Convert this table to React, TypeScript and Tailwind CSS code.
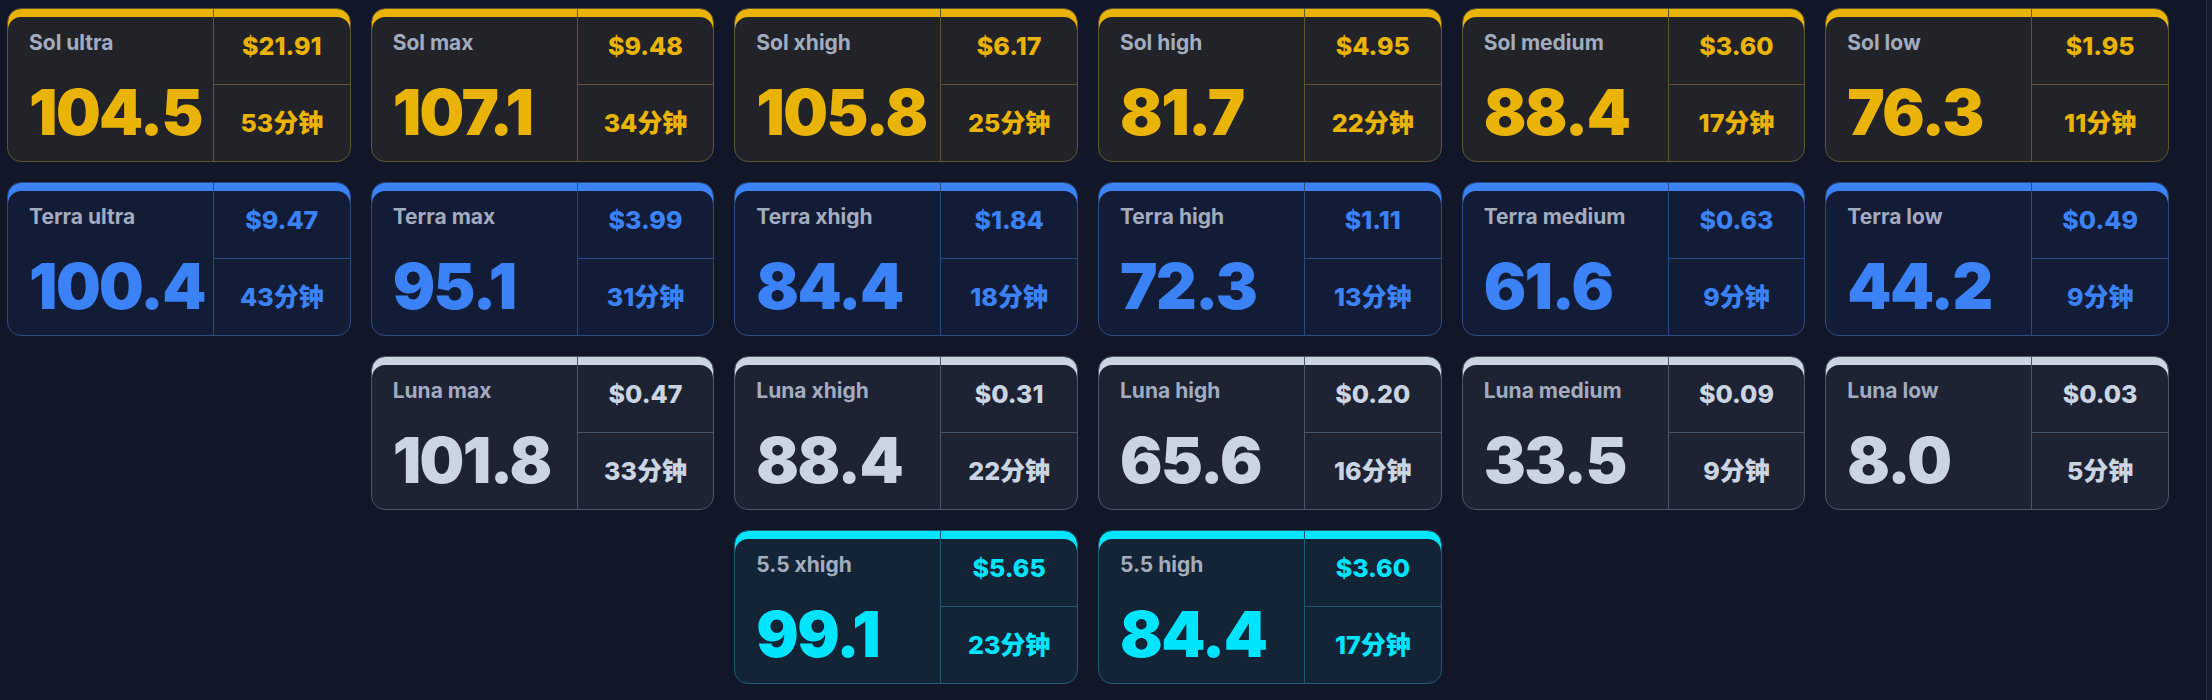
import React from 'react';

type Tier = 'sol' | 'terra' | 'luna' | 'gpt';

const tierStyle: Record<Tier, { card: string; accent: string; line: string }> = {
  sol: {
    card: 'bg-[#222329] border-[#5e552f] shadow-[inset_0_8px_0_0_#eab308]',
    accent: 'text-[#eab308]',
    line: 'border-[#5e552f]',
  },
  terra: {
    card: 'bg-[#131c37] border-[#2d4a7f] shadow-[inset_0_8px_0_0_#3b82f6]',
    accent: 'text-[#3b82f6]',
    line: 'border-[#2d4a7f]',
  },
  luna: {
    card: 'bg-[#1e2334] border-[#4b5569] shadow-[inset_0_8px_0_0_#cbd5e1]',
    accent: 'text-[#cbd5e1]',
    line: 'border-[#4b5569]',
  },
  gpt: {
    card: 'bg-[#132436] border-[#1d5b70] shadow-[inset_0_8px_0_0_#00e5ff]',
    accent: 'text-[#00e5ff]',
    line: 'border-[#1d5b70]',
  },
};

type Item = { name: string; score: string; price: string; time: string; tier: Tier; start?: string };

const items: Item[] = [
  { name: 'Sol ultra', score: '104.5', price: '$21.91', time: '53分钟', tier: 'sol' },
  { name: 'Sol max', score: '107.1', price: '$9.48', time: '34分钟', tier: 'sol' },
  { name: 'Sol xhigh', score: '105.8', price: '$6.17', time: '25分钟', tier: 'sol' },
  { name: 'Sol high', score: '81.7', price: '$4.95', time: '22分钟', tier: 'sol' },
  { name: 'Sol medium', score: '88.4', price: '$3.60', time: '17分钟', tier: 'sol' },
  { name: 'Sol low', score: '76.3', price: '$1.95', time: '11分钟', tier: 'sol' },
  { name: 'Terra ultra', score: '100.4', price: '$9.47', time: '43分钟', tier: 'terra' },
  { name: 'Terra max', score: '95.1', price: '$3.99', time: '31分钟', tier: 'terra' },
  { name: 'Terra xhigh', score: '84.4', price: '$1.84', time: '18分钟', tier: 'terra' },
  { name: 'Terra high', score: '72.3', price: '$1.11', time: '13分钟', tier: 'terra' },
  { name: 'Terra medium', score: '61.6', price: '$0.63', time: '9分钟', tier: 'terra' },
  { name: 'Terra low', score: '44.2', price: '$0.49', time: '9分钟', tier: 'terra' },
  { name: 'Luna max', score: '101.8', price: '$0.47', time: '33分钟', tier: 'luna', start: 'col-start-2' },
  { name: 'Luna xhigh', score: '88.4', price: '$0.31', time: '22分钟', tier: 'luna' },
  { name: 'Luna high', score: '65.6', price: '$0.20', time: '16分钟', tier: 'luna' },
  { name: 'Luna medium', score: '33.5', price: '$0.09', time: '9分钟', tier: 'luna' },
  { name: 'Luna low', score: '8.0', price: '$0.03', time: '5分钟', tier: 'luna' },
  { name: '5.5 xhigh', score: '99.1', price: '$5.65', time: '23分钟', tier: 'gpt', start: 'col-start-3' },
  { name: '5.5 high', score: '84.4', price: '$3.60', time: '17分钟', tier: 'gpt' },
];

const ScoreCard = ({ item }: { item: Item }) => {
  const s = tierStyle[item.tier];
  return (
    <div className={`${item.start ?? ''} grid h-[154px] grid-cols-[3fr_2fr] overflow-hidden rounded-[14px] border ${s.card}`}>
      <div className="pl-[21px] pt-[20px]">
        <div className="text-[21px] font-bold leading-[28px] text-[#a3acbf]">{item.name}</div>
        <div className={`mt-[24px] text-[63px] font-black leading-none tracking-tight ${s.accent}`}>{item.score}</div>
      </div>
      <div className={`grid grid-rows-2 border-l ${s.line}`}>
        <div className={`flex items-center justify-center border-b text-[25px] font-extrabold ${s.line} ${s.accent}`}>
          {item.price}
        </div>
        <div className={`flex items-center justify-center pt-[2px] text-[25px] font-extrabold ${s.accent}`}>{item.time}</div>
      </div>
    </div>
  );
};

export default function App() {
  return (
    <div
      className="flex min-h-screen bg-[#111729]"
      style={{ fontFamily: 'Inter, "Noto Sans CJK SC", sans-serif' }}
    >
      <div className="grid flex-1 grid-cols-6 content-start gap-5 pb-4 pl-[7px] pr-[37px] pt-[8px]">
        {items.map((item) => (
          <ScoreCard key={item.name} item={item} />
        ))}
      </div>
      <div className="w-[6px] border-l border-[#232c42] bg-[#141b2e]" />
    </div>
  );
}
